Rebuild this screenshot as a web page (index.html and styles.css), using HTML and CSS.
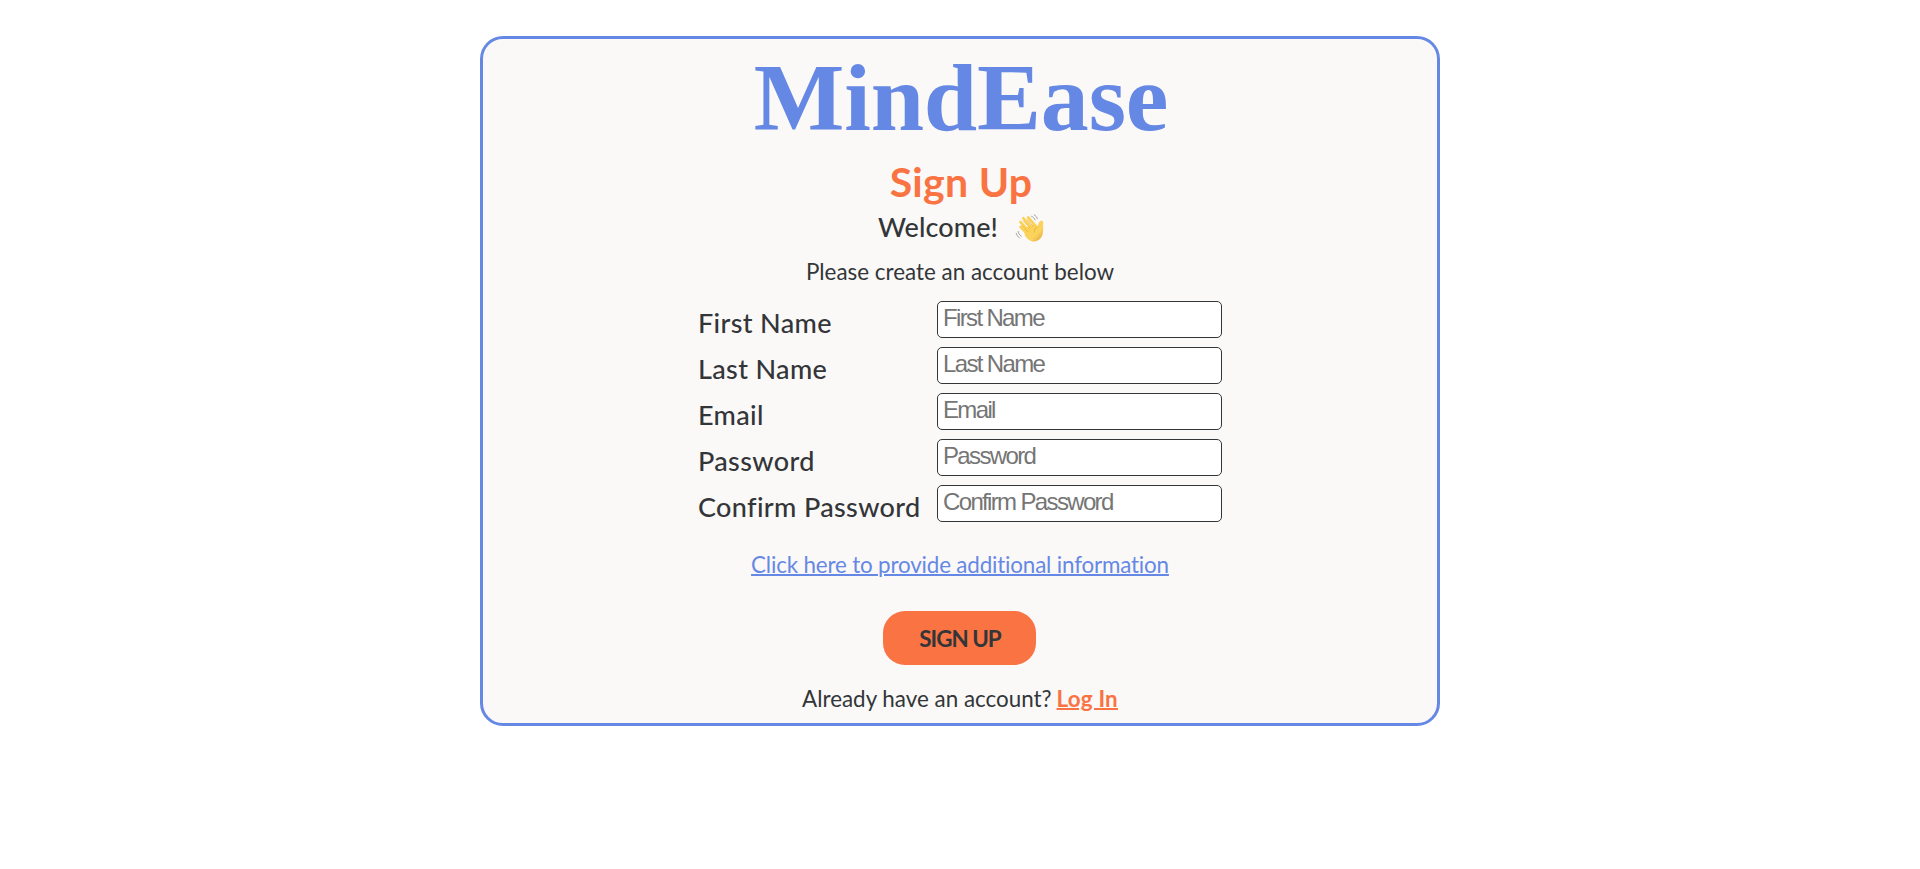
FILE: index.html
```html
<!DOCTYPE html>
<html lang="en">
<head>
<meta charset="utf-8">
<title>MindEase</title>
<link rel="stylesheet" href="styles.css">
</head>
<body>
<main class="card">
  <h1 class="brand">MindEase</h1>
  <h2 class="heading">Sign Up</h2>
  <div class="welcome">
    <span>Welcome!</span>
    <svg class="wave" viewBox="0 0 27 27" aria-hidden="true">
      <defs><linearGradient id="skin" x1="0" y1="0" x2="1" y2="1"><stop offset="0" stop-color="#fdd24f"/><stop offset=".65" stop-color="#fad35d"/><stop offset="1" stop-color="#dfa13a"/></linearGradient></defs>
      <g fill="none" stroke="#fbd255" stroke-linecap="round" stroke-width="2.7">
        <path d="M5 12.600l7 7M4.800 7.800l9 9.500M7.600 4.200l9 10M12.200 3.400l8 9"/>
      </g>
      <path fill="url(#skin)" d="M8 14L18.500 10l2.700 2.200c.9-1.700.5-4 2.400-5.300 1.400-.9 3.300-.3 3.100 1.300-.3 2.500.2 5.500-.2 9-.3 5.200-3.700 9.100-8.500 9.400-3.700.2-6.700-2.600-8.800-5.600z"/>
      <path fill="none" stroke="#e3a93d" stroke-width=".7" stroke-linecap="round" d="M6 11l6 6M7.800 7l6.300 6.500M11.500 5.600l5.500 6.200M21 12.400c-2 1-3 3-2.800 5"/>
      <path fill="none" stroke="#9a9a9a" stroke-width=".9" stroke-linecap="round" d="M15.500 2.200c1.600.6 2.700 1.800 3.400 3.500M18 .8c1.500.8 2.500 2 3 3.600M2.500 16.800c.3 2 1.300 3.500 3.100 4.500M.7 18.600c.5 2 1.500 3.300 3 4.200"/>
    </svg>
  </div>
  <p class="intro">Please create an account below</p>
  <form class="form">
    <label class="label" for="first">First Name</label><input class="field" id="first" type="text" placeholder="First Name">
    <label class="label" for="last">Last Name</label><input class="field" id="last" type="text" placeholder="Last Name">
    <label class="label" for="email">Email</label><input class="field" id="email" type="email" placeholder="Email">
    <label class="label" for="pass">Password</label><input class="field" id="pass" type="password" placeholder="Password">
    <label class="label" for="confirm">Confirm Password</label><input class="field" id="confirm" type="password" placeholder="Confirm Password">
  </form>
  <a class="more">Click here to provide additional information</a>
  <button class="submit" type="button">SIGN UP</button>
  <p class="login"><span>Already have an account?</span><a class="login-link">Log In</a></p>
</main>
</body>
</html>
```
FILE: styles.css
```css
* { box-sizing: border-box; }
body {
  margin: 0;
  padding-top: 36px;
  background: #fff;
  color: #333638;
  font-family: Lato, "Open Sans", sans-serif;
}
.card {
  display: flex;
  flex-direction: column;
  align-items: center;
  width: 960px;
  height: 690px;
  margin: 0 auto;
  border: 3px solid #6688e5;
  border-radius: 23px;
  background: #fbf9f8;
  white-space: nowrap;
}
.brand {
  margin: 9px 0 0 2px;
  font: bold 96px/100px "Liberation Serif", serif;
  letter-spacing: -0.2px;
  color: #6688e5;
}
.heading {
  margin: 9px 0 0 2px;
  font-size: 41px;
  line-height: 50px;
  font-weight: 700;
  letter-spacing: 0.3px;
  color: #f97343;
}
.welcome {
  display: flex;
  align-items: center;
  gap: 17px;
  height: 36px;
  margin-top: 3px;
  padding-left: 2px;
  font-size: 27px;
  line-height: 32px;
  font-weight: 500;
  letter-spacing: 0.1px;
}
.welcome span { padding-bottom: 3px; }
.wave { width: 29px; height: 28px; }
.intro {
  margin: 8px 0 0;
  font-size: 22.4px;
  line-height: 36px;
}
.form {
  display: grid;
  grid-template-columns: 239px 285px;
  grid-auto-rows: 37px;
  row-gap: 9px;
  margin: 11px 0 0;
}
.label {
  padding-top: 4px;
  font-size: 27px;
  line-height: 36px;
  font-weight: 500;
  letter-spacing: 0.35px;
}
.field {
  width: 285px;
  height: 37px;
  padding: 0 5px 4px;
  border: 1px solid #333638;
  border-radius: 5px;
  background: #fff;
  font: 24px "Liberation Sans", Arial, sans-serif;
  letter-spacing: -1.65px;
}
.field::placeholder { color: #757575; }
.more {
  margin-top: 25px;
  font-size: 22.4px;
  line-height: 36px;
  letter-spacing: -0.17px;
  color: #6688e5;
  text-decoration: underline;
  text-decoration-thickness: 2px;
}
.submit {
  width: 153px;
  height: 54px;
  margin: 28px 1px 0 0;
  padding: 0 0 0 1px;
  border: 0;
  border-radius: 22px;
  background: #f97343;
  color: #333638;
  font: bold 22.4px Lato, sans-serif;
  letter-spacing: -1px;
}
.login {
  display: flex;
  gap: 5px;
  margin: 16px 0 0;
  font-size: 22.4px;
  line-height: 36px;
}
.login-link {
  color: #f97343;
  font-weight: 700;
  letter-spacing: 0.2px;
  text-decoration: underline;
  text-decoration-thickness: 2px;
}
```
